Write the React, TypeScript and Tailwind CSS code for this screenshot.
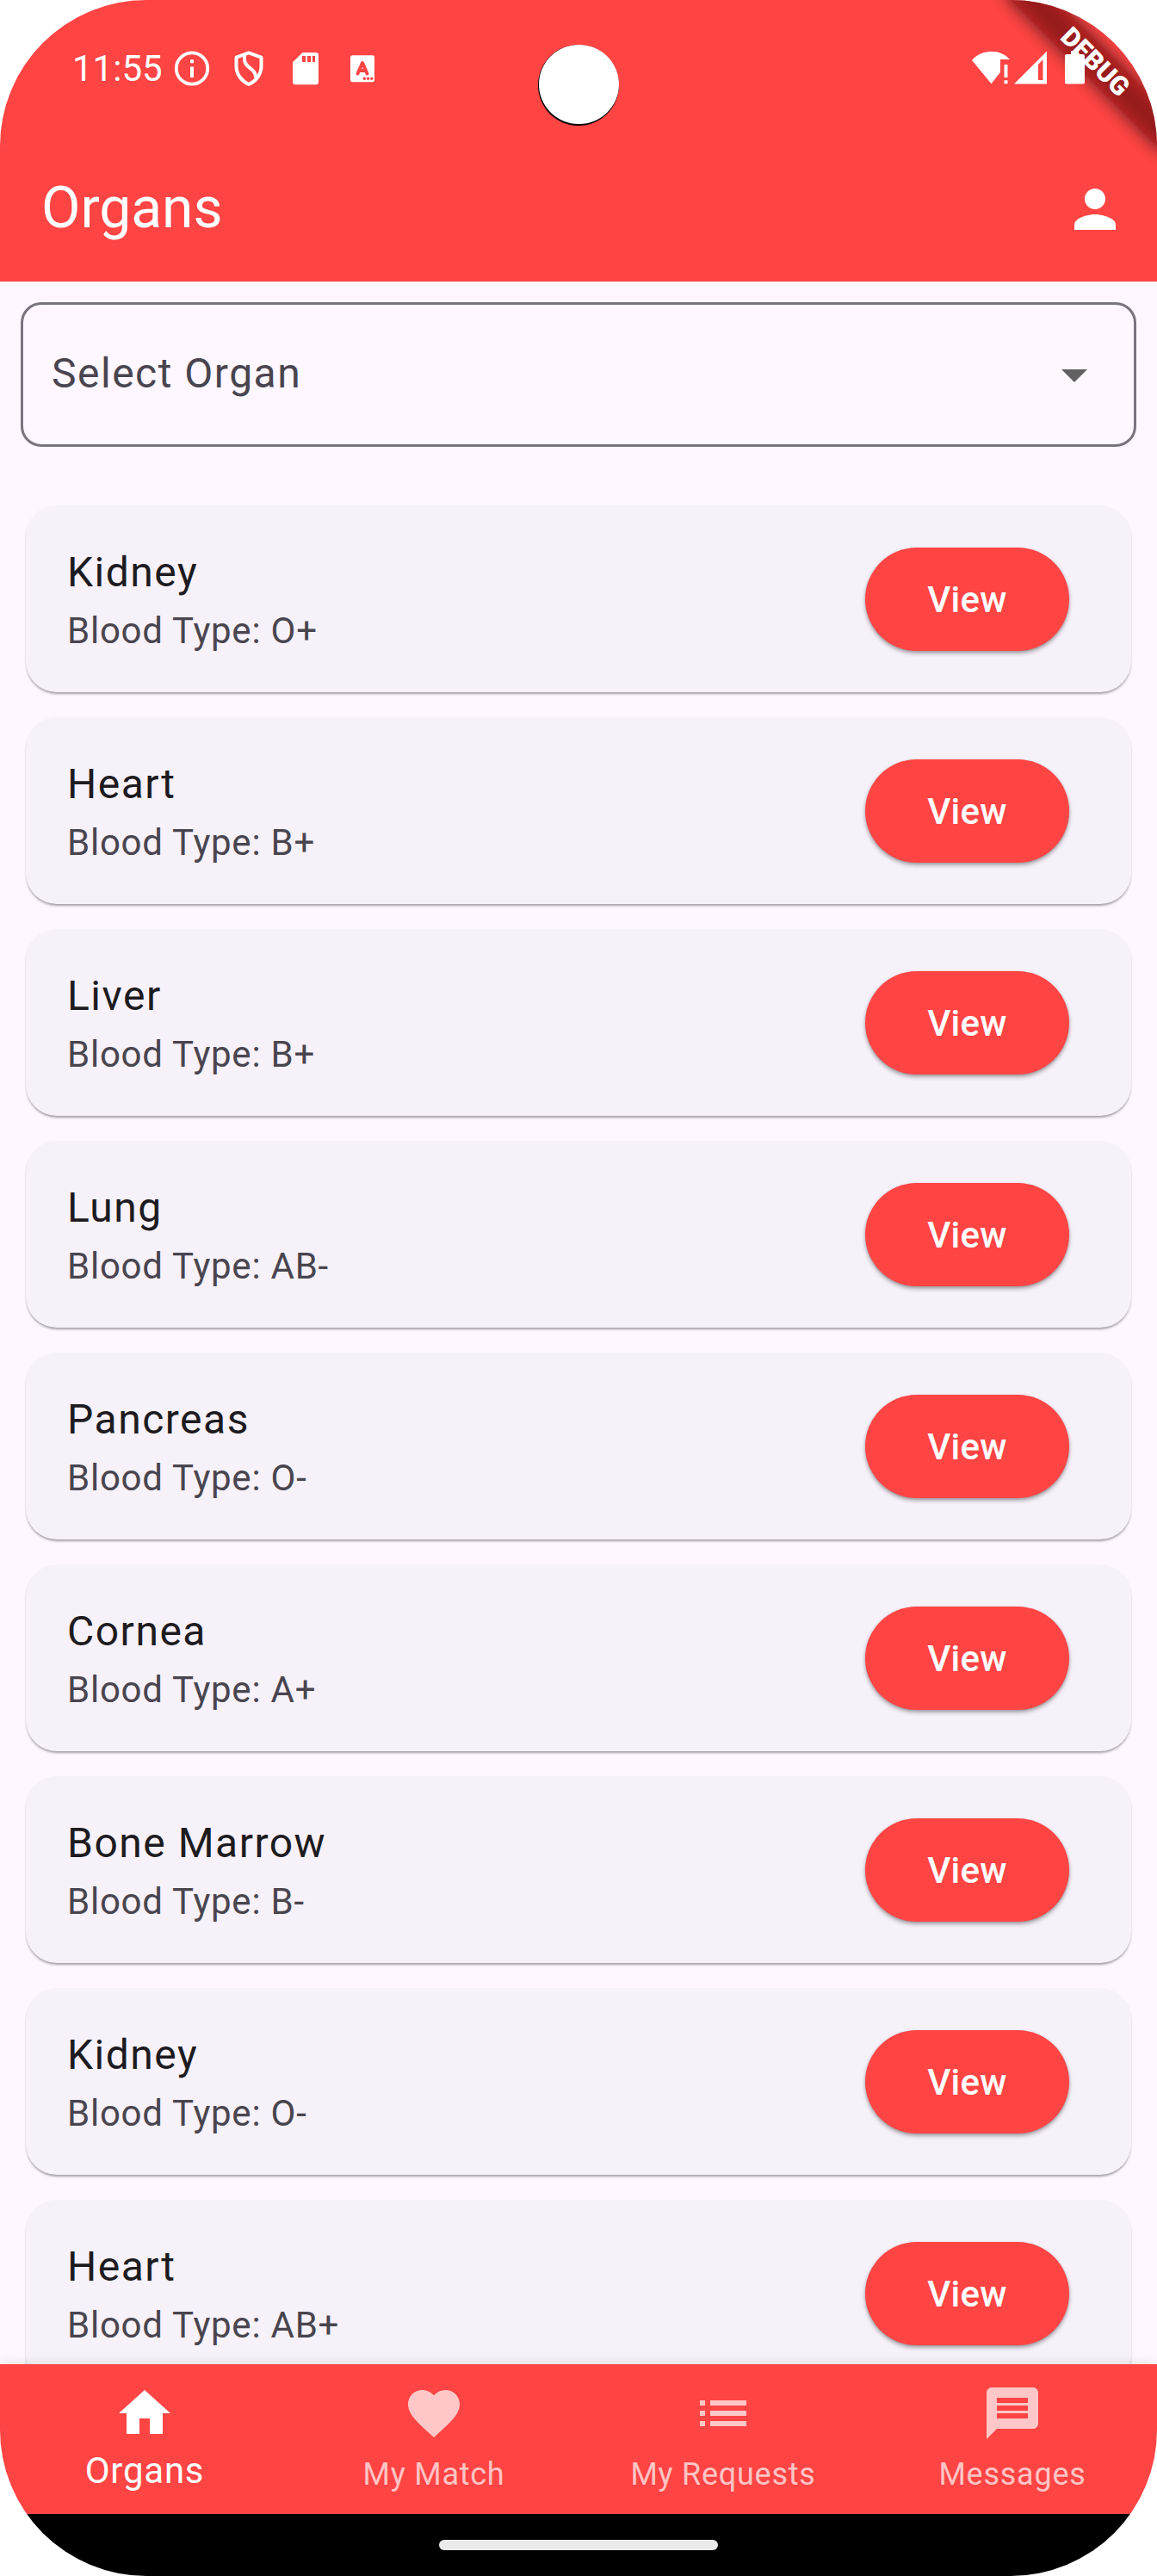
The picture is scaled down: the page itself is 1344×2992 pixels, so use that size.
import type { ReactNode } from "react";

const organs = [
  { name: "Kidney", blood: "O+" },
  { name: "Heart", blood: "B+" },
  { name: "Liver", blood: "B+" },
  { name: "Lung", blood: "AB-" },
  { name: "Pancreas", blood: "O-" },
  { name: "Cornea", blood: "A+" },
  { name: "Bone Marrow", blood: "B-" },
  { name: "Kidney", blood: "O-" },
  { name: "Heart", blood: "AB+" },
];

const tabs = [
  { label: "Organs", active: true, d: "M10 20v-6h4v6h5v-8h3L12 3 2 12h3v8z" },
  {
    label: "My Match",
    active: false,
    d: "M12 21.35l-1.45-1.32C5.4 15.36 2 12.28 2 8.5 2 5.42 4.42 3 7.5 3c1.74 0 3.41.81 4.5 2.09C13.09 3.81 14.76 3 16.5 3 19.58 3 22 5.42 22 8.5c0 3.78-3.4 6.86-8.55 11.54L12 21.35z",
  },
  {
    label: "My Requests",
    active: false,
    d: "M3 13h2v-2H3v2zm0 4h2v-2H3v2zm0-8h2V7H3v2zm4 4h14v-2H7v2zm0 4h14v-2H7v2zM7 7v2h14V7H7z",
  },
  {
    label: "Messages",
    active: false,
    d: "M20 2H4c-1.1 0-1.99.9-1.99 2L2 22l4-4h14c1.1 0 2-.9 2-2V4c0-1.1-.9-2-2-2zm-2 12H6v-2h12v2zm0-3H6V9h12v2zm0-3H6V6h12v2z",
  },
];

function Icon24({ d, className }: { d: string; className?: string }) {
  return (
    <svg viewBox="0 0 24 24" className={`block size-[72px] shrink-0 fill-current ${className ?? ""}`}>
      <path d={d} />
    </svg>
  );
}

function Slot({ children }: { children: ReactNode }) {
  return (
    <svg viewBox="0 0 66 66" className="block size-[66px] shrink-0">
      {children}
    </svg>
  );
}

function StatusBar() {
  return (
    <div className="relative z-20 flex h-[159px] items-start text-white">
      <div className="w-[190px] shrink-0 pt-[55px] pl-[84px] text-[42px] leading-[49px]">11:55</div>
      <div className="flex pt-[47px]">
        <Slot>
          <circle cx="33" cy="32.5" r="18.2" fill="none" stroke="#fff" strokeWidth="3.8" />
          <path d="M31 22.3h4v4h-4zM31 30.6h4v12.4h-4z" fill="#fff" />
        </Slot>
        <Slot>
          <path
            d="M33 14.4L18.5 19.7V30C18.5 39.2 24.5 47.2 33 51C41.5 47.2 47.5 39.2 47.5 30V19.7Z"
            fill="none"
            stroke="#fff"
            strokeWidth="4"
            strokeLinejoin="round"
          />
          <path d="M28 17V22C28 32.5 41.5 32 41 43" fill="none" stroke="#fff" strokeWidth="4" />
        </Slot>
        <Slot>
          <path
            fillRule="evenodd"
            fill="#fff"
            d="M29.5 14H45a3 3 0 0 1 3 3V48.3a3 3 0 0 1-3 3H21a3 3 0 0 1-3-3V25.2ZM29 18v7h4v-7zM35 18v7h4v-7zM41 18v7h3v-7z"
          />
        </Slot>
        <Slot>
          <rect x="19" y="17.3" width="28" height="31" rx="2.5" fill="#fff" />
          <path
            d="M27.5 38.5L33 26L38.5 38.5M29.5 35H36.5"
            fill="none"
            stroke="#ff4444"
            strokeWidth="4"
            strokeLinecap="round"
            strokeLinejoin="round"
          />
          <g fill="#ff4444">
            <circle cx="35.3" cy="44.3" r="1.7" />
            <circle cx="39.6" cy="44.3" r="1.7" />
            <circle cx="43.9" cy="44.3" r="1.7" />
          </g>
        </Slot>
      </div>
      <div className="ml-auto flex pt-[47px] pr-[84px]">
        <svg viewBox="0 0 51 66" className="block h-[66px] w-[51px] fill-white">
          <path d="M2 23C8 16 16 12.7 24.5 12.7S41 16 46 22H35V37L24.5 50.3Z" />
          <path d="M39.5 28h4v15h-4zM39.5 46.3h4v4h-4z" />
        </svg>
        <svg viewBox="0 0 59 66" className="block h-[66px] w-[59px] fill-white">
          <path fillRule="evenodd" d="M0 50.5L38 12.5V50.5ZM28 28V46h5.5V22Z" />
        </svg>
        <svg viewBox="0 0 23 66" className="block h-[66px] w-[23px] fill-white">
          <path d="M7 12h9v4h5a2 2 0 0 1 2 2V48.5a2 2 0 0 1-2 2H2a2 2 0 0 1-2-2V18a2 2 0 0 1 2-2H7Z" />
        </svg>
      </div>
    </div>
  );
}

function DebugBanner() {
  return (
    <div className="absolute top-0 left-full z-10 size-0 origin-top-left rotate-45">
      <div className="absolute top-[84px] -left-[130px] h-[36px] w-[260px] bg-black/65 blur-[10px]" />
      <div className="absolute top-[84px] -left-[120px] flex h-[36px] w-[240px] items-center justify-center bg-[#b71c1ca0] text-[30.6px] leading-none font-black text-white">
        DEBUG
      </div>
    </div>
  );
}

function OrganCard({ name, blood }: { name: string; blood: string }) {
  return (
    <div className="flex h-[217px] shrink-0 items-center justify-between rounded-[36px] bg-[#f7f1f9] pr-[72px] pl-12 shadow-[0_3px_3px_-1px_rgba(0,0,0,0.3),0_2px_2px_rgba(0,0,0,0.08)]">
      <div className="pt-[5px]">
        <div className="text-[48px] leading-[68px] tracking-[1.5px] text-[#1d1b20]">{name}</div>
        <div className="text-[42px] leading-[67px] tracking-[0.75px] text-[#49454f]">Blood Type: {blood}</div>
      </div>
      <button className="h-[120px] w-[237px] rounded-full bg-[#ff4444] pt-px text-[42px] font-medium tracking-[0.3px] text-white shadow-[0_3px_5px_rgba(0,0,0,0.3),0_1px_3px_rgba(0,0,0,0.15)]">
        View
      </button>
    </div>
  );
}

export default function App() {
  return (
    <div className="h-[2992px] w-[1344px] bg-white font-[Roboto,sans-serif]">
      <div className="relative flex h-full w-full flex-col overflow-hidden rounded-[170px] bg-[#fef7ff]">
        <DebugBanner />
        <div className="absolute top-[52px] left-[625px] z-20 size-[94px] rounded-full bg-black">
          <div className="ml-[0.5px] h-[92px] w-[93px] rounded-full bg-white" />
        </div>

        <header className="shrink-0 bg-[#ff4444]">
          <StatusBar />
          <div className="flex h-[168px] items-center justify-between pr-9 pl-12 text-white">
            <h1 className="pb-[2px] text-[66px] leading-[84px]">Organs</h1>
            <Icon24 d="M12 12c2.21 0 4-1.79 4-4s-1.79-4-4-4-4 1.79-4 4 1.79 4 4 4zm0 2c-2.67 0-8 1.34-8 4v2h16v-2c0-2.66-5.33-4-8-4z" />
          </div>
        </header>

        <main className="flex min-h-0 grow flex-col">
          <div className="mx-6 mt-6 flex h-[168px] shrink-0 items-center justify-between rounded-[24px] border-3 border-[#79747e] px-[33px] text-[48px] tracking-[1.5px] text-[#49454f]">
            <span className="pb-[3px]">Select Organ</span>
            <Icon24 d="M7 10l5 5 5-5z" className="text-[#616161]" />
          </div>
          <div className="mt-6 flex min-h-0 grow flex-col gap-[29px] overflow-hidden px-[30px] pt-[44px]">
            {organs.map((o, i) => (
              <OrganCard key={i} name={o.name} blood={o.blood} />
            ))}
          </div>
        </main>

        <nav className="z-10 grid h-[174px] shrink-0 grid-cols-4 bg-[#ff4444] shadow-[0_0_14px_rgba(0,0,0,0.12)]">
          {tabs.map((t) =>
            t.active ? (
              <div key={t.label} className="flex flex-col items-center pt-[21px] text-white">
                <Icon24 d={t.d} />
                <span className="mt-[6px] text-[42px] leading-[50px] tracking-[0.75px]">{t.label}</span>
              </div>
            ) : (
              <div key={t.label} className="flex flex-col items-center pt-[21px] text-white/70">
                <Icon24 d={t.d} />
                <span className="mt-[13px] text-[36px] leading-[44px] tracking-[0.75px]">{t.label}</span>
              </div>
            ),
          )}
        </nav>
        <div className="z-10 flex h-[72px] shrink-0 justify-center bg-black pt-[30px]">
          <div className="h-3 w-[324px] rounded-full bg-[#ebebeb]" />
        </div>
      </div>
    </div>
  );
}
